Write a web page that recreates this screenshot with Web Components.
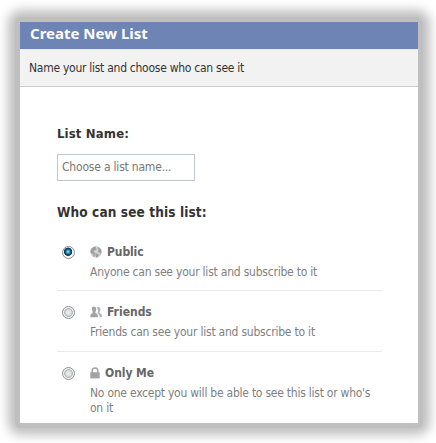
<!DOCTYPE html>
<html lang="en">
<head>
<meta charset="utf-8">
<title>Create New List</title>
<style>
    body {
        margin: 0;
        width: 436px;
        height: 443px;
        overflow: hidden;
        background: #fff;
        font-family: "DejaVu Sans Condensed", "Noto Sans", sans-serif;
    }
</style>
</head>
<body>
<list-dialog title="Create New List" subtitle="Name your list and choose who can see it">
    <list-name label="List Name:" placeholder="Choose a list name..."></list-name>
    <privacy-group label="Who can see this list:">
        <privacy-option icon="globe" name="Public" checked style="--name: -.1px; --desc: -.22px; --height: 60px">Anyone can see your list and subscribe to it</privacy-option>
        <privacy-option icon="friends" name="Friends" style="--name: 0px; --desc: -.22px; --height: 61px">Friends can see your list and subscribe to it</privacy-option>
        <privacy-option icon="lock" name="Only Me" style="--name: -.05px; --desc: -.24px; --height: 61px">No one except you will be able to see this list or who's<br>on it</privacy-option>
    </privacy-group>
</list-dialog>

<script>
const icons = {
    globe: `<svg width="12" height="12" viewBox="0 0 12 12">
        <circle cx="6" cy="6" r="5.7" fill="#d2d2d2"/>
        <path d="M6.5.4 4 .7 1.7 2.2.4 4.8l.3 2.4 1.6.3 1.1 1.2-.2 1.7 1 .6.6-1.8 1-1.3L4.6 6.4 3.5 5.9l.8-1.3 1.8-.6.4-1.2L5.6 1.9z" fill="#a0a0a0"/>
        <path d="M7.9 1 7.6 2.8 8.8 3.6 8 4.7l.4 1.5 1.7.5.1 1.4-1 2 1.4-1.5.9-2.3-.3-2.4-1.3-1.9zM6.3 7.4l2 .6.4 1.2-1 2.1-1.5.3-.7-2.4z" fill="#a0a0a0"/>
    </svg>`,
    friends: `<svg width="12" height="12" viewBox="0 0 12 12">
        <path d="M6.9 1h2l1.5 1.2-.1 2.4-.8 1.5v.9l2 1 .4 3.2H9.7L9 8.4 7.4 7.2l.8-2z" fill="#b3b3b3"/>
        <path d="M2.2 1 4 .5l2 .9.3 2-.9 2.5v1l2 1 .7 3.3H.2l.5-2.9 2.1-1.2V5.8L1.8 3.6z" fill="#a2a2a2"/>
    </svg>`,
    lock: `<svg width="10" height="12" viewBox="0 0 10 12">
        <path d="M2.2 6V3.7a2.8 2.8 0 0 1 5.6 0V6" fill="none" stroke="#a3a3a3" stroke-width="1.5"/>
        <path d="M.3 5.2h9.4v6.2H.3z" fill="#a3a3a3"/>
    </svg>`
};

class ListDialog extends HTMLElement {
    constructor() {
        super();
        this.attachShadow({ mode: "open" });
    }
    getStyles() {
        return `
            <style>
            :host {
                display: block;
                box-sizing: border-box;
                width: 408px;
                margin: 17px 0 0 15px;
                padding: 5px;
                background: #bfbfbf;
                border-radius: 6px;
                box-shadow: 0 0 11px 7px #bfbfbf;
            }
            section {
                height: 401px;
                background: #fff;
            }
            h1 {
                box-sizing: border-box;
                height: 27px;
                margin: 0;
                padding: 2px 10px 0;
                background: #6d84b4;
                color: #fff;
                font-family: "Noto Sans", sans-serif;
                font-size: 15px;
                line-height: 18px;
            }
            p {
                box-sizing: border-box;
                height: 38px;
                margin: 0;
                padding: 10px 9px 0;
                background: #f2f2f2;
                border-top: 1px solid #e4e9f3;
                border-bottom: 1px solid #ccc;
                color: #333;
                font-size: 12px;
                line-height: 16px;
                letter-spacing: -.27px;
            }
            div {
                padding: 39px 36px 0 37px;
            }
            </style>
        `;
    }
    connectedCallback() {
        this.shadowRoot.innerHTML = `
            ${this.getStyles()}
            <section>
                <h1>${this.getAttribute("title")}</h1>
                <p>${this.getAttribute("subtitle")}</p>
                <div><slot></slot></div>
            </section>
        `;
    }
}

class ListName extends HTMLElement {
    constructor() {
        super();
        this.attachShadow({ mode: "open" });
    }
    connectedCallback() {
        this.shadowRoot.innerHTML = `
            <style>
            :host {
                display: block;
            }
            label {
                display: block;
                color: #333;
                font-size: 13px;
                font-weight: bold;
                line-height: 16px;
                letter-spacing: .15px;
            }
            input {
                display: block;
                box-sizing: border-box;
                width: 138px;
                height: 27px;
                margin-top: 12px;
                padding: 0 4px 2px;
                border: 1px solid #bdc7d8;
                border-radius: 0;
                background: #fff;
                font: 12px "DejaVu Sans Condensed", "Noto Sans", sans-serif;
                letter-spacing: -.2px;
            }
            input::placeholder {
                color: #777;
                opacity: 1;
            }
            </style>
            <label for="name">${this.getAttribute("label")}</label>
            <input id="name" type="text" placeholder="${this.getAttribute("placeholder")}">
        `;
    }
}

class PrivacyGroup extends HTMLElement {
    constructor() {
        super();
        this.attachShadow({ mode: "open" });
    }
    connectedCallback() {
        this.shadowRoot.innerHTML = `
            <style>
            :host {
                display: block;
                margin-top: 23px;
            }
            h2 {
                margin: 0 0 11px;
                color: #333;
                font-size: 13.5px;
                line-height: 16px;
                letter-spacing: .12px;
            }
            ::slotted(:not(:last-child)) {
                border-bottom: 1px solid #e9e9e9;
            }
            </style>
            <h2>${this.getAttribute("label")}</h2>
            <slot></slot>
        `;
    }
}

class PrivacyOption extends HTMLElement {
    constructor() {
        super();
        this.attachShadow({ mode: "open" });
    }
    getStyles() {
        return `
            <style>
            :host {
                display: grid;
                grid-template-columns: 13px 1fr;
                column-gap: 15px;
                box-sizing: border-box;
                height: var(--height);
                padding: 13px 0 0 5px;
            }
            .radio {
                box-sizing: border-box;
                width: 13px;
                height: 13px;
                margin-top: 2px;
                border: 1px solid #8e8f8f;
                border-radius: 50%;
                background: radial-gradient(circle, #eee 0, #dfe0e2 2.5px, #b4b6b9 4px, #f4f4f4 4.7px);
            }
            :host([checked]) .radio {
                background: radial-gradient(circle at 46% 43%, #b8edff 0, #2fa5d8 1.4px, #0d527e 2.8px, #12334b 3.8px, #f4f4f4 4.5px);
            }
            h3 {
                display: flex;
                align-items: center;
                gap: 5px;
                margin: 0;
                color: #666;
                font-size: 12px;
                line-height: 16px;
                letter-spacing: var(--name);
            }
            p {
                margin: 5px 0 0;
                color: #808080;
                font-size: 12px;
                line-height: 15px;
                letter-spacing: var(--desc);
                white-space: nowrap;
            }
            </style>
        `;
    }
    connectedCallback() {
        this.shadowRoot.innerHTML = `
            ${this.getStyles()}
            <span class="radio"></span>
            <div>
                <h3>${icons[this.getAttribute("icon")]}<span>${this.getAttribute("name")}</span></h3>
                <p><slot></slot></p>
            </div>
        `;
    }
}

customElements.define('list-dialog', ListDialog);
customElements.define('list-name', ListName);
customElements.define('privacy-group', PrivacyGroup);
customElements.define('privacy-option', PrivacyOption);
</script>
</body>
</html>
